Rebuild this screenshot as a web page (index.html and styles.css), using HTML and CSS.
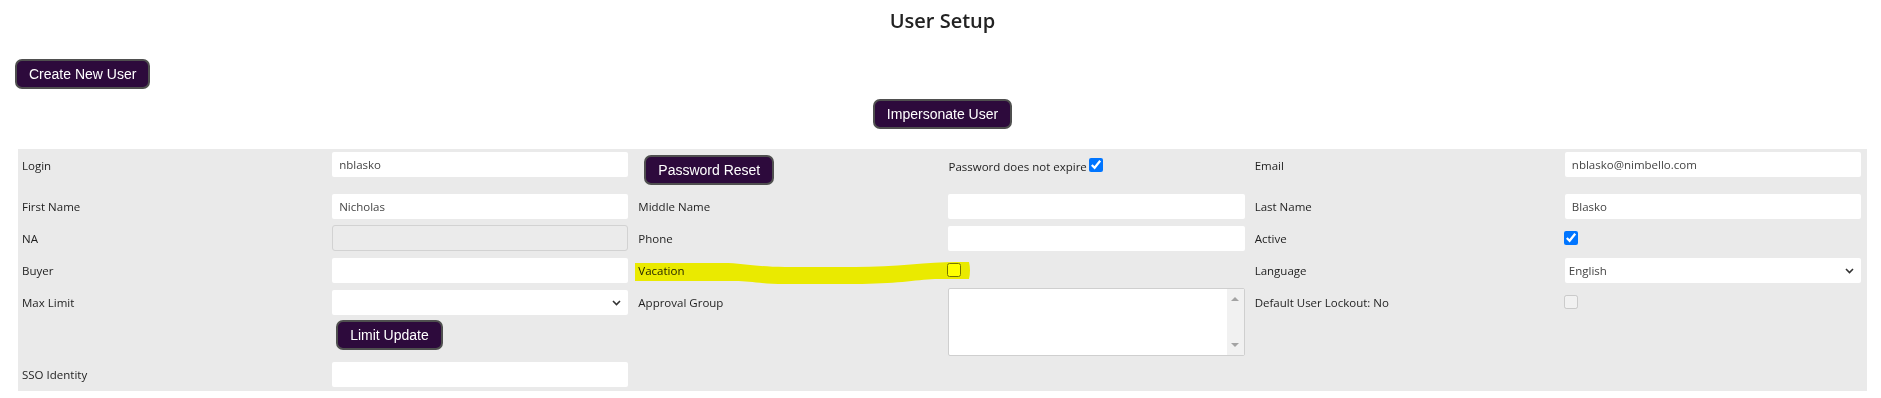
FILE: index.html
```html
<!DOCTYPE html>
<html lang="en">
<head>
<meta charset="utf-8">
<title>User Setup</title>
<link rel="stylesheet" href="styles.css">
</head>
<body>
<div class="page">
  <h1 class="title">User Setup</h1>
  <div class="actions-left"><button class="btn" type="button">Create New User</button></div>
  <div class="actions-center"><button class="btn" type="button">Impersonate User</button></div>

  <div class="panel">
    <div class="form-grid">
      <!-- row 1 -->
      <div class="lbl lbl-top">Login</div>
      <div class="fld fld-top"><input class="txt" type="text" value="nblasko"></div>
      <div class="fld"><button class="btn btn-cell" type="button">Password Reset</button></div>
      <div class="fld fld-text"><span class="inline-text">Password does not expire</span><input class="chk chk-inline" type="checkbox" checked></div>
      <div class="lbl lbl-top">Email</div>
      <div class="fld fld-top"><input class="txt" type="text" value="nblasko@nimbello.com"></div>

      <!-- row 2 -->
      <div class="lbl">First Name</div>
      <div class="fld"><input class="txt" type="text" value="Nicholas"></div>
      <div class="lbl">Middle Name</div>
      <div class="fld"><input class="txt" type="text" value=""></div>
      <div class="lbl">Last Name</div>
      <div class="fld"><input class="txt" type="text" value="Blasko"></div>

      <!-- row 3 -->
      <div class="lbl">NA</div>
      <div class="fld"><input class="txt txt-disabled" type="text" value="" disabled></div>
      <div class="lbl">Phone</div>
      <div class="fld"><input class="txt" type="text" value=""></div>
      <div class="lbl">Active</div>
      <div class="fld"><input class="chk" type="checkbox" checked></div>

      <!-- row 4 -->
      <div class="lbl">Buyer</div>
      <div class="fld"><input class="txt" type="text" value=""></div>
      <div class="lbl">Vacation</div>
      <div class="fld"><input class="chk" type="checkbox"></div>
      <div class="lbl">Language</div>
      <div class="fld">
        <div class="select-wrap">
          <select class="sel"><option>English</option></select>
          <svg class="chevron" width="9" height="6" viewBox="0 0 9 6"><path d="M1 1 L4.5 4.5 L8 1" fill="none" stroke="#333" stroke-width="1.6"/></svg>
        </div>
      </div>

      <!-- row 5 -->
      <div class="lbl">Max Limit</div>
      <div class="fld">
        <div class="select-wrap">
          <select class="sel"><option></option></select>
          <svg class="chevron" width="9" height="6" viewBox="0 0 9 6"><path d="M1 1 L4.5 4.5 L8 1" fill="none" stroke="#333" stroke-width="1.6"/></svg>
        </div>
      </div>
      <div class="lbl">Approval Group</div>
      <div class="fld fld-area">
        <div class="tbox">
          <textarea class="area"></textarea>
          <div class="vscroll"><span class="arr-up"></span><span class="arr-down"></span></div>
        </div>
      </div>
      <div class="lbl">Default User Lockout: No</div>
      <div class="fld"><input class="chk" type="checkbox" disabled></div>

      <!-- row 6 -->
      <div class="cell-empty"></div>
      <div class="fld fld-btn"><button class="btn btn-cell" type="button">Limit Update</button></div>
      <div class="cell-empty"></div>
      <div class="cell-empty"></div>
      <div class="cell-empty"></div>

      <!-- row 7 -->
      <div class="lbl">SSO Identity</div>
      <div class="fld"><input class="txt" type="text" value=""></div>
      <div class="cell-empty"></div>
      <div class="cell-empty"></div>
      <div class="cell-empty"></div>
      <div class="cell-empty"></div>
    </div>

    <svg class="highlight" width="336" height="24" viewBox="0 0 336 24">
      <path d="M0 1 L88 1 C108 1 120 5 150 5 L220 5 C260 5 295 0 320 0 L334 0 Q336 8 334 17 L300 17 C280 18 260 22 220 22 L150 22 C125 22 115 19 100 19 L0 19 Z" fill="#ffff00"/>
    </svg>
  </div>
</div>
</body>
</html>
```

FILE: styles.css
```css
html, body {
  margin: 0;
  padding: 0;
  background: #ffffff;
}

.page {
  padding: 0 14px 0 18px;
  font-family: "Open Sans", "Noto Sans", sans-serif;
  color: #222222;
}

.title {
  margin: 7px 0 0;
  font-size: 20px;
  line-height: 27px;
  font-weight: 600;
  text-align: center;
  color: #222222;
}

.actions-left {
  margin-top: 25px;
  display: flex;
}

.actions-left .btn {
  margin-left: -3px;
}

.actions-center {
  margin-top: 10px;
  display: flex;
  justify-content: center;
}

.btn {
  box-sizing: border-box;
  height: 30px;
  padding: 0 12px;
  border: 2px solid #4f4f4f;
  border-radius: 7px;
  background: #2d0a3c;
  color: #ffffff;
  font-family: "Liberation Sans", Arial, sans-serif;
  font-size: 14px;
  line-height: 26px;
  white-space: nowrap;
  cursor: pointer;
}

.panel {
  position: relative;
  margin-top: 20px;
  background: #eaeaea;
  padding-bottom: 1px;
}

.form-grid {
  display: grid;
  grid-template-columns: repeat(6, minmax(0, 1fr));
  grid-template-rows: 41px 32px 32px 32px 32px 40px 32px;
}

.lbl {
  display: flex;
  align-items: center;
  padding-left: 4px;
  font-size: 11.5px;
  color: #1e1e1e;
  white-space: nowrap;
}

.lbl-top {
  align-items: flex-start;
  padding-top: 9px;
}

.fld {
  display: flex;
  align-items: center;
  padding: 0 6px 0 1px;
  min-width: 0;
}

.fld-top {
  align-items: flex-start;
  padding-top: 3px;
}

.fld-text {
  align-items: flex-start;
  padding-top: 10px;
  padding-left: 6px;
  font-size: 11.5px;
  color: #1e1e1e;
}

.fld-btn {
  align-items: flex-start;
  padding-top: 2px;
}

.fld-area {
  grid-row: span 2;
  align-items: flex-start;
  padding-top: 2px;
}

.btn-cell {
  margin-left: 9px;
}

.txt {
  box-sizing: border-box;
  flex: 1;
  min-width: 0;
  height: 25px;
  margin: 0 0 0 5px;
  padding: 0 7px;
  border: none;
  border-radius: 2px;
  background: #ffffff;
  font-family: "Open Sans", "Noto Sans", sans-serif;
  font-size: 11.5px;
  color: #444444;
  outline: none;
}

.txt-disabled {
  height: 26px;
  background: #ebebeb;
  border: 1px solid #d2d2d2;
  border-radius: 3px;
}

.chk {
  width: 14px;
  height: 14px;
  margin: 0 0 0 4px;
}

.chk-inline {
  margin: -1px 0 0 2px;
}

.inline-text {
  white-space: nowrap;
}

.select-wrap {
  position: relative;
  flex: 1;
  min-width: 0;
  margin-left: 5px;
  display: flex;
}

.sel {
  box-sizing: border-box;
  flex: 1;
  min-width: 0;
  height: 25px;
  padding: 0 20px 0 4px;
  border: none;
  border-radius: 2px;
  background: #ffffff;
  font-family: "Open Sans", "Noto Sans", sans-serif;
  font-size: 11.5px;
  color: #444444;
  appearance: none;
  -webkit-appearance: none;
  outline: none;
}

.chevron {
  position: absolute;
  right: 7px;
  top: 10px;
  pointer-events: none;
}

.tbox {
  box-sizing: border-box;
  flex: 1;
  min-width: 0;
  height: 68px;
  margin-left: 5px;
  display: flex;
  border: 1px solid #cfcfcf;
  border-radius: 2px;
  background: #ffffff;
}

.area {
  flex: 1;
  min-width: 0;
  border: none;
  resize: none;
  outline: none;
  background: transparent;
  overflow: hidden;
}

.vscroll {
  width: 17px;
  background: #f1f1f1;
  display: flex;
  flex-direction: column;
  justify-content: space-between;
  align-items: center;
  padding: 8px 0;
  box-sizing: border-box;
}

.arr-up {
  width: 0;
  height: 0;
  border-left: 4px solid transparent;
  border-right: 4px solid transparent;
  border-bottom: 4px solid #a3a3a3;
}

.arr-down {
  width: 0;
  height: 0;
  border-left: 4px solid transparent;
  border-right: 4px solid transparent;
  border-top: 4px solid #a3a3a3;
}

.highlight {
  position: absolute;
  left: 617px;
  top: 113px;
  mix-blend-mode: multiply;
  pointer-events: none;
}
```
